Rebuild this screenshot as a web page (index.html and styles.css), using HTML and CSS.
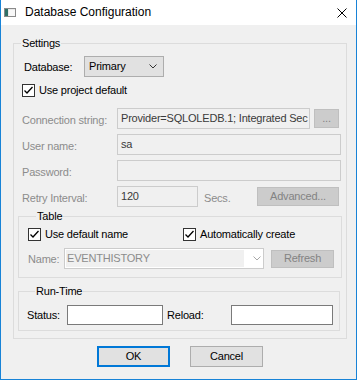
FILE: index.html
```html
<!DOCTYPE html>
<html lang="en">
<head>
    <meta charset="UTF-8">
    <meta name="viewport" content="width=device-width, initial-scale=1.0">
    <title>Database Configuration</title>
    <link rel="stylesheet" href="styles.css">
</head>
<body>
    <div class="window">
        <div class="titlebar">
            <svg class="app-icon" width="12" height="9" viewBox="0 0 12 9">
                <rect x="0.5" y="0.5" width="11" height="8" fill="#e8e8e8" stroke="#8a8a8a"/>
                <rect x="1" y="1" width="3" height="7" fill="#2f6f66"/>
                <rect x="5" y="2" width="6" height="6" fill="#f8f8f8"/>
            </svg>
            <span class="title">Database Configuration</span>
            <svg class="close" width="10" height="10" viewBox="0 0 10 10">
                <path d="M0.5 0.5 L9.5 9.5 M9.5 0.5 L0.5 9.5" stroke="#000" stroke-width="1" fill="none"/>
            </svg>
        </div>

        <div class="client">
            <fieldset class="group settings">
                <legend>Settings</legend>

                <div class="row row-db">
                    <span class="lbl">Database:</span>
                    <div class="combo">
                        <span class="combo-text">Primary</span>
                        <svg class="chev" width="8" height="5" viewBox="0 0 8 5">
                            <polyline points="0.5,0.5 4,4 7.5,0.5" fill="none" stroke="#333" stroke-width="1"/>
                        </svg>
                    </div>
                </div>

                <div class="check check-proj">
                    <span class="box"><svg width="11" height="11" viewBox="0 0 11 11"><polyline points="1.5,5.5 4,8 9.5,2" fill="none" stroke="#000" stroke-width="1.3"/></svg></span>
                    <span>Use project default</span>
                </div>

                <div class="row row-first">
                    <span class="lbl dim">Connection string:</span>
                    <span class="edit conn">Provider=SQLOLEDB.1; Integrated Sec</span>
                    <span class="btn btn-dis dots">...</span>
                </div>
                <div class="row">
                    <span class="lbl dim">User name:</span>
                    <span class="edit wide">sa</span>
                </div>
                <div class="row">
                    <span class="lbl dim">Password:</span>
                    <span class="edit wide"></span>
                </div>
                <div class="row">
                    <span class="lbl dim">Retry Interval:</span>
                    <span class="edit short">120</span>
                    <span class="secs dim">Secs.</span>
                    <span class="btn btn-dis advanced">Advanced...</span>
                </div>

                <fieldset class="group table">
                    <legend>Table</legend>
                    <div class="tbl-checks">
                        <div class="check check-first">
                            <span class="box"><svg width="11" height="11" viewBox="0 0 11 11"><polyline points="1.5,5.5 4,8 9.5,2" fill="none" stroke="#000" stroke-width="1.3"/></svg></span>
                            <span>Use default name</span>
                        </div>
                        <div class="check">
                            <span class="box"><svg width="11" height="11" viewBox="0 0 11 11"><polyline points="1.5,5.5 4,8 9.5,2" fill="none" stroke="#000" stroke-width="1.3"/></svg></span>
                            <span>Automatically create</span>
                        </div>
                    </div>
                    <div class="name-row">
                        <span class="name-lbl dim">Name:</span>
                        <div class="combo-dis">
                            <span class="combo-edit">EVENTHISTORY</span>
                            <svg class="chev-dis" width="8" height="5" viewBox="0 0 8 5">
                                <polyline points="0.5,0.5 4,4 7.5,0.5" fill="none" stroke="#a8a8a8" stroke-width="1"/>
                            </svg>
                        </div>
                        <span class="btn btn-dis refresh">Refresh</span>
                    </div>
                </fieldset>

                <fieldset class="group runtime">
                    <legend>Run-Time</legend>
                    <div class="rt-row">
                        <span class="status-lbl">Status:</span>
                        <span class="white-edit status"></span>
                        <span class="reload-lbl">Reload:</span>
                        <span class="white-edit reload"></span>
                    </div>
                </fieldset>
            </fieldset>

            <div class="buttons">
                <button class="btn btn-default">OK</button>
                <button class="btn">Cancel</button>
            </div>
        </div>
    </div>
</body>
</html>
```

FILE: styles.css
```css
body {
    margin: 0;
    background-color: #fff;
    font-family: "Liberation Sans", Arial, sans-serif;
    font-size: 11px;
    line-height: 13px;
    letter-spacing: -0.2px;
    color: #000;
}
.window {
    width: 357px;
    height: 380px;
    box-sizing: border-box;
    border: 1px solid #1883d7;
    border-top: none;
    background-color: #f0f0f0;
}
.titlebar {
    height: 25px;
    background-color: #fff;
    display: flex;
    align-items: center;
}
.app-icon {
    margin-left: 3px;
    flex: none;
}
.title {
    margin-left: 9px;
    font-size: 12px;
    letter-spacing: 0;
    flex: 1;
}
.close {
    margin-right: 9px;
    flex: none;
}
.client {
    padding: 12px 0 0 12px;
}
.group {
    margin: 0;
    padding: 0;
    border: 1px solid #dcdcdc;
    min-width: 0;
    box-sizing: border-box;
}
.group legend {
    padding: 0 1px;
    line-height: 13px;
}
.settings {
    width: 334px;
    padding-bottom: 7px;
}
.settings > legend {
    margin-left: 7px;
}
.row {
    display: flex;
    align-items: center;
    height: 21px;
    padding-left: 8px;
    margin-top: 5px;
}
.row-db {
    margin-top: 6px;
    padding-left: 10px;
}
.row-first {
    margin-top: 11px;
}
.lbl {
    width: 95px;
    flex: none;
    padding-top: 3px;
}
.row-db .lbl {
    width: 60px;
    padding-top: 1px;
}
.dim {
    color: #8c8c8c;
}
.combo {
    width: 80px;
    height: 21px;
    box-sizing: border-box;
    border: 1px solid #adadad;
    background-color: #e1e1e1;
    display: flex;
    align-items: center;
}
.combo-text {
    flex: 1;
    padding-left: 4px;
}
.chev {
    margin-right: 6px;
}
.check {
    display: flex;
    align-items: center;
    height: 13px;
}
.check-proj {
    margin-top: 7px;
    padding-left: 8px;
}
.box {
    width: 13px;
    height: 13px;
    box-sizing: border-box;
    border: 1px solid #333;
    background-color: #fff;
    margin-right: 4px;
    display: flex;
}
.edit {
    height: 21px;
    box-sizing: border-box;
    border: 1px solid #cccccc;
    background-color: #f0f0f0;
    padding: 0 3px;
    line-height: 19px;
    overflow: hidden;
    white-space: nowrap;
    color: #3a3a3a;
}
.conn {
    width: 193px;
}
.wide {
    width: 224px;
}
.short {
    width: 81px;
}
.secs {
    width: 53px;
    margin-left: 6px;
    padding-top: 3px;
}
.btn {
    height: 21px;
    width: 73px;
    box-sizing: border-box;
    border: 1px solid #adadad;
    background-color: #e1e1e1;
    font: inherit;
    letter-spacing: inherit;
    color: #000;
    padding: 0;
    display: flex;
    align-items: center;
    justify-content: center;
}
.btn-default {
    border: 2px solid #0078d7;
}
.btn-dis {
    background-color: #cccccc;
    border-color: #bfbfbf;
    color: #838383;
}
.dots {
    width: 25px;
    height: 19px;
    margin-left: 4px;
}
.advanced {
    width: 82px;
    height: 19px;
}
.table {
    width: 324px;
    margin: 3px 0 0 4px;
    padding: 0 0 8px 9px;
}
.table > legend,
.runtime > legend {
    margin-left: 8px;
}
.tbl-checks {
    display: flex;
    margin-top: 5px;
}
.check-first {
    width: 155px;
}
.name-row {
    display: flex;
    align-items: center;
    height: 21px;
    margin-top: 7px;
}
.name-lbl {
    width: 36px;
    padding-top: 2px;
}
.combo-dis {
    width: 200px;
    height: 21px;
    box-sizing: border-box;
    border: 1px solid #cccccc;
    background-color: #fff;
    display: flex;
    align-items: center;
}
.combo-edit {
    width: 177px;
    height: 17px;
    margin: 1px;
    padding-left: 1px;
    line-height: 17px;
    background-color: #f0f0f0;
    color: #8c8c8c;
}
.chev-dis {
    margin-left: 8px;
}
.refresh {
    width: 63px;
    height: 18px;
    margin-left: 7px;
}
.runtime {
    width: 322px;
    margin: 7px 0 0 4px;
    padding: 0 0 5px 8px;
}
.rt-row {
    display: flex;
    align-items: center;
    height: 20px;
    margin-top: 7px;
}
.status-lbl {
    width: 40px;
}
.reload-lbl {
    width: 64px;
    margin-left: 4px;
}
.white-edit {
    height: 20px;
    box-sizing: border-box;
    border: 1px solid #7a7a7a;
    background-color: #fff;
}
.status {
    width: 96px;
}
.reload {
    width: 102px;
}
.buttons {
    display: flex;
    gap: 20px;
    margin-top: 7px;
    padding-left: 84px;
}
```
